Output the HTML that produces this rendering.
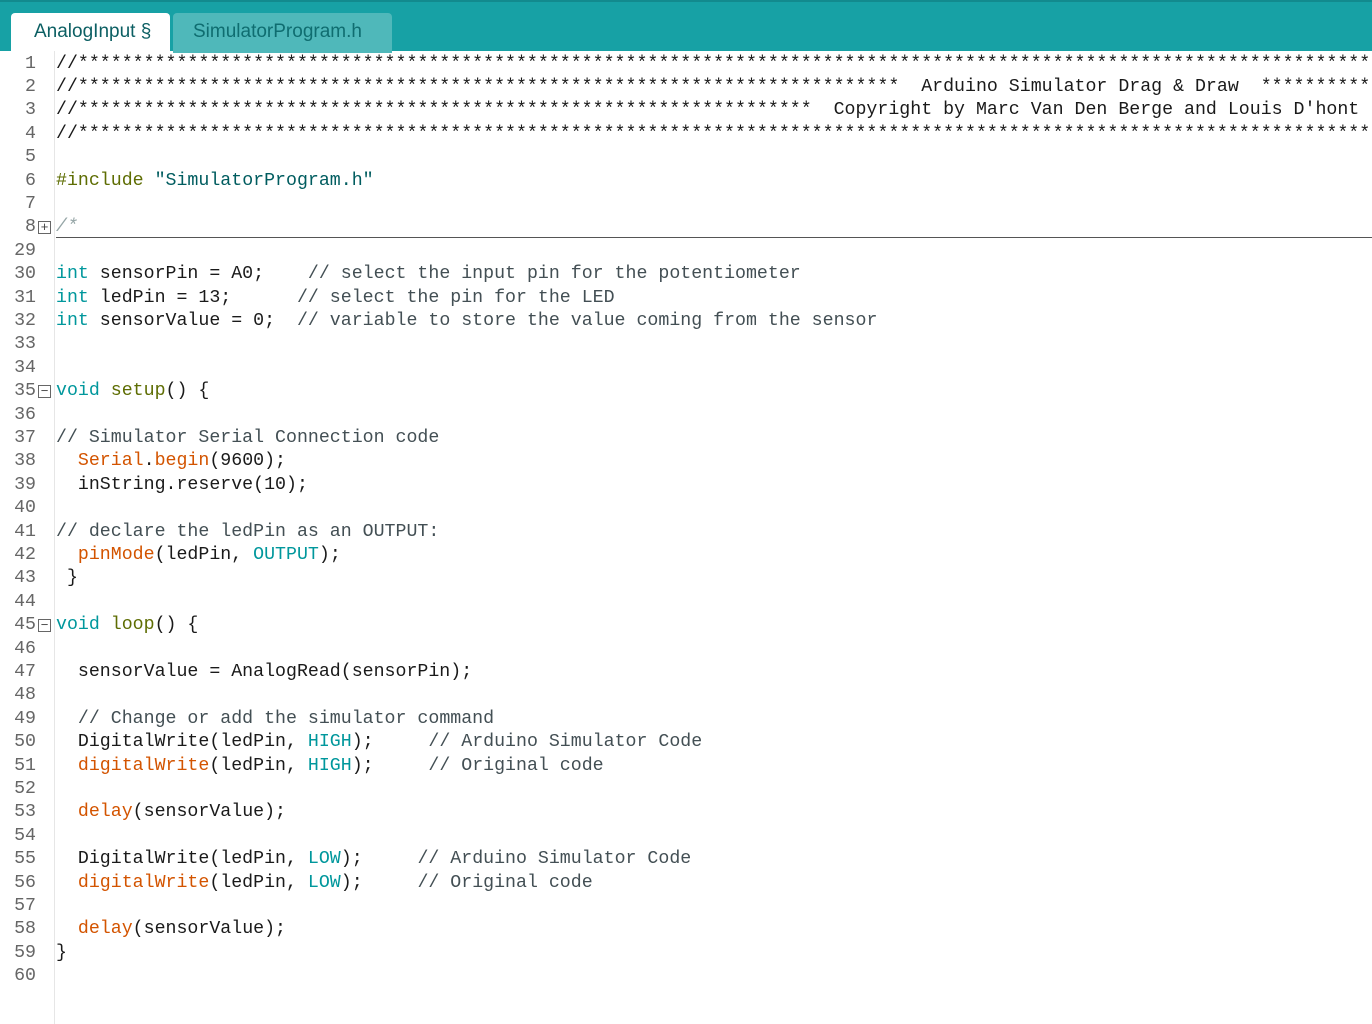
<!DOCTYPE html>
<html><head><meta charset="utf-8"><style>
html,body{margin:0;padding:0;width:1372px;height:1024px;overflow:hidden;background:#fff;}
#hdr{position:absolute;left:0;top:0;width:1372px;height:51px;background:#17a1a5;border-top:2px solid #128a8e;box-sizing:border-box;}
.tab{position:absolute;top:11px;height:40px;font-family:"Liberation Sans",sans-serif;font-size:19px;line-height:38px;box-sizing:border-box;border-radius:4px 4px 0 0;}
#t1{left:11px;width:159px;background:#fff;color:#0c5f63;padding-left:23px;}
#t2{left:173px;width:219px;background:#4fb8ba;color:#0f6d70;padding-left:20px;}
#gut{position:absolute;left:0;top:51px;width:54px;height:973px;border-right:1px solid #e6e6e6;}
#wrap{position:absolute;left:56px;top:0;width:1316px;height:1024px;overflow:hidden;}
#code{position:absolute;left:0;top:0;font-family:"Liberation Mono",monospace;font-size:18.25px;color:#1a1a1a;white-space:pre;}
.r{position:absolute;left:0;height:23.4px;line-height:23.4px;}
.k{color:#00979c}.o{color:#d35400}.c{color:#434f54}.g{color:#95a5a6;font-style:italic}
.fold{position:absolute;left:38px;width:13px;height:13px;border:1px solid #666;box-sizing:border-box;font:13px/10px "Liberation Sans",sans-serif;text-align:center;color:#444;}
#hr{position:absolute;left:56px;top:237px;width:1316px;height:1px;background:#555;}
</style></head><body>
<div id="hdr"><div class="tab" id="t1">AnalogInput §</div><div class="tab" id="t2">SimulatorProgram.h</div></div>
<div id="gut"></div>
<div id="hr"></div>
<div id="nums" style="position:absolute;left:0;top:0;width:54px;font-family:'Liberation Mono',monospace;font-size:18.25px;color:#666;"></div>
<div id="wrap"><div id="code"></div></div>
<script>
var st="*".repeat(130);
var L=[
["1","//"+st],
["2","//"+"*".repeat(75)+"  Arduino Simulator Drag &amp; Draw  "+"*".repeat(20)],
["3","//"+"*".repeat(67)+"  Copyright by Marc Van Den Berge and Louis D'hont  "+"*".repeat(10)],
["4","//"+st],
["5",""],
["6",'<span style="color:#5e6d03">#include</span> <span style="color:#005c5f">"SimulatorProgram.h"</span>'],
["7",""],
["8",'<span class="g">/*</span>'],
["29",""],
["30",'<span class="k">int</span> sensorPin = A0;    <span class="c">// select the input pin for the potentiometer</span>'],
["31",'<span class="k">int</span> ledPin = 13;      <span class="c">// select the pin for the LED</span>'],
["32",'<span class="k">int</span> sensorValue = 0;  <span class="c">// variable to store the value coming from the sensor</span>'],
["33",""],["34",""],
["35",'<span class="k">void</span> <span style="color:#5e6d03">setup</span>() {'],
["36",""],
["37",'<span class="c">// Simulator Serial Connection code</span>'],
["38",'  <span class="o">Serial</span>.<span class="o">begin</span>(9600);'],
["39","  inString.reserve(10);"],
["40",""],
["41",'<span class="c">// declare the ledPin as an OUTPUT:</span>'],
["42",'  <span class="o">pinMode</span>(ledPin, <span class="k">OUTPUT</span>);'],
["43"," }"],
["44",""],
["45",'<span class="k">void</span> <span style="color:#5e6d03">loop</span>() {'],
["46",""],
["47","  sensorValue = AnalogRead(sensorPin);"],
["48",""],
["49",'  <span class="c">// Change or add the simulator command</span>'],
["50",'  DigitalWrite(ledPin, <span class="k">HIGH</span>);     <span class="c">// Arduino Simulator Code</span>'],
["51",'  <span class="o">digitalWrite</span>(ledPin, <span class="k">HIGH</span>);     <span class="c">// Original code</span>'],
["52",""],
["53",'  <span class="o">delay</span>(sensorValue);'],
["54",""],
["55",'  DigitalWrite(ledPin, <span class="k">LOW</span>);     <span class="c">// Arduino Simulator Code</span>'],
["56",'  <span class="o">digitalWrite</span>(ledPin, <span class="k">LOW</span>);     <span class="c">// Original code</span>'],
["57",""],
["58",'  <span class="o">delay</span>(sensorValue);'],
["59","}"],
["60",""]];
var n="",c="";
for(var i=0;i<L.length;i++){var t=52.5+i*23.4;
n+='<div class="r" style="top:'+t+'px;width:36px;text-align:right">'+L[i][0]+'</div>';
c+='<div class="r" style="top:'+t+'px">'+(L[i][1]||"")+'</div>';
if(L[i][0]=="8")n+='<div class="fold" style="top:'+(t+5)+'px">+</div>';
if(L[i][0]=="35"||L[i][0]=="45")n+='<div class="fold" style="top:'+(t+5)+'px">&minus;</div>';}
document.getElementById("nums").innerHTML=n;document.getElementById("code").innerHTML=c;
</script>
</body></html>
